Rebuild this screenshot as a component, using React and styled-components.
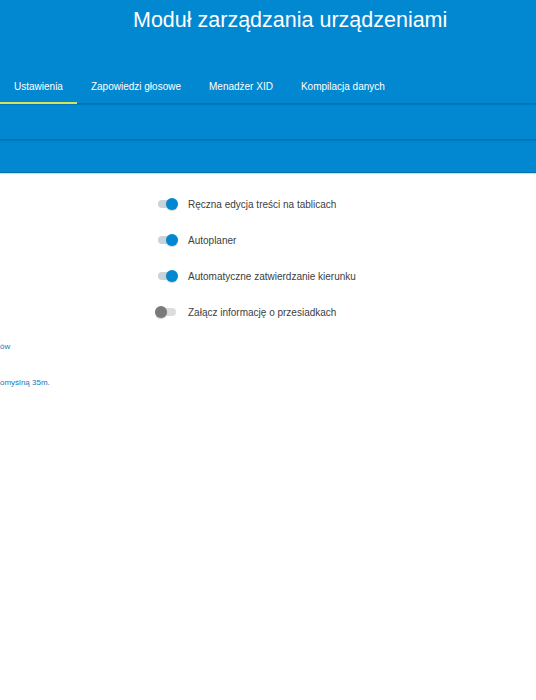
import { useState } from "react"
import styled, { createGlobalStyle } from "styled-components"

const GlobalStyle = createGlobalStyle`
  html, body {
    margin: 0;
    padding: 0;
    background: #ffffff;
    font-family: "Liberation Sans", Arial, sans-serif;
  }
`

const Page = styled.div`
  width: 536px;
  min-height: 700px;
  overflow: hidden;
  background: #fff;
`

const Header = styled.header`
  background: #0288d1;
  color: #fff;
`

const TitleRow = styled.div`
  height: 68px;
  padding: 6px 0 0 133px;
  box-sizing: border-box;
`

const Title = styled.h1`
  margin: 0;
  font-size: 21.5px;
  line-height: 28px;
  font-weight: 400;
  white-space: nowrap;
`

const Band = styled.div`
  height: ${props => props.h}px;
  display: flex;
  align-items: stretch;
  border-bottom: 1px solid #0373b0;
  box-shadow: 0 1px 1px rgba(0, 60, 100, 0.18);
  position: relative;
`

const Tab = styled.div`
  padding: 0 14px;
  display: flex;
  align-items: center;
  padding-top: 2px;
  font-size: 10px;
  font-weight: 400;
  color: #fff;
  white-space: nowrap;
  border-bottom: 2px solid ${props => (props.active ? "#d7e35f" : "transparent")};
  margin-bottom: -1px;
  cursor: pointer;
`

const Content = styled.main`
  display: flex;
  padding-top: 21px;
`

const Notes = styled.div`
  width: 155px;
  padding-top: 148px;
  display: flex;
  flex-direction: column;
  gap: 26px;
`

const Note = styled.a`
  font-size: 8px;
  line-height: 10px;
  color: #1976b8;
  white-space: nowrap;
`

const Options = styled.div`
  display: flex;
  flex-direction: column;
  gap: 16px;
`

const Row = styled.label`
  display: flex;
  align-items: center;
  height: 20px;
  gap: 9px;
  font-size: 10px;
  color: #404040;
  cursor: pointer;
`

const Switch = styled.span`
  position: relative;
  width: 24px;
  height: 14px;
  flex-shrink: 0;
`

const Track = styled.span`
  position: absolute;
  left: 3px;
  right: 3px;
  top: 3px;
  height: 8px;
  border-radius: 4px;
  background: ${props => (props.on ? "#c9d3da" : "#dcdcdc")};
`

const Thumb = styled.span`
  position: absolute;
  top: 1px;
  left: ${props => (props.on ? "11px" : "0px")};
  width: 12px;
  height: 12px;
  border-radius: 50%;
  background: ${props => (props.on ? "#0288d1" : "#7a7a7a")};
  box-shadow: 0 1px 1px rgba(0, 0, 0, 0.2);
`

const tabs = ["Ustawienia", "Zapowiedzi głosowe", "Menadżer XID", "Kompilacja danych"]

const App = () => {
  const [opts, setOpts] = useState([
    { label: "Ręczna edycja treści na tablicach", on: true },
    { label: "Autoplaner", on: true },
    { label: "Automatyczne zatwierdzanie kierunku", on: true },
    { label: "Załącz informację o przesiadkach", on: false },
  ])

  const toggle = i => setOpts(opts.map((o, j) => (j === i ? { ...o, on: !o.on } : o)))

  return (
    <Page>
      <GlobalStyle />
      <Header>
        <TitleRow>
          <Title>Moduł zarządzania urządzeniami</Title>
        </TitleRow>
        <Band h={35}>
          {tabs.map((t, i) => (
            <Tab key={t} active={i === 0}>{t}</Tab>
          ))}
        </Band>
        <Band h={35} />
        <Band h={32} />
      </Header>
      <Content>
        <Notes>
          <Note>ów</Note>
          <Note>omyślną 35m.</Note>
        </Notes>
        <Options>
          {opts.map((o, i) => (
            <Row key={o.label} onClick={() => toggle(i)}>
              <Switch>
                <Track on={o.on} />
                <Thumb on={o.on} />
              </Switch>
              {o.label}
            </Row>
          ))}
        </Options>
      </Content>
    </Page>
  )
}

export default App
